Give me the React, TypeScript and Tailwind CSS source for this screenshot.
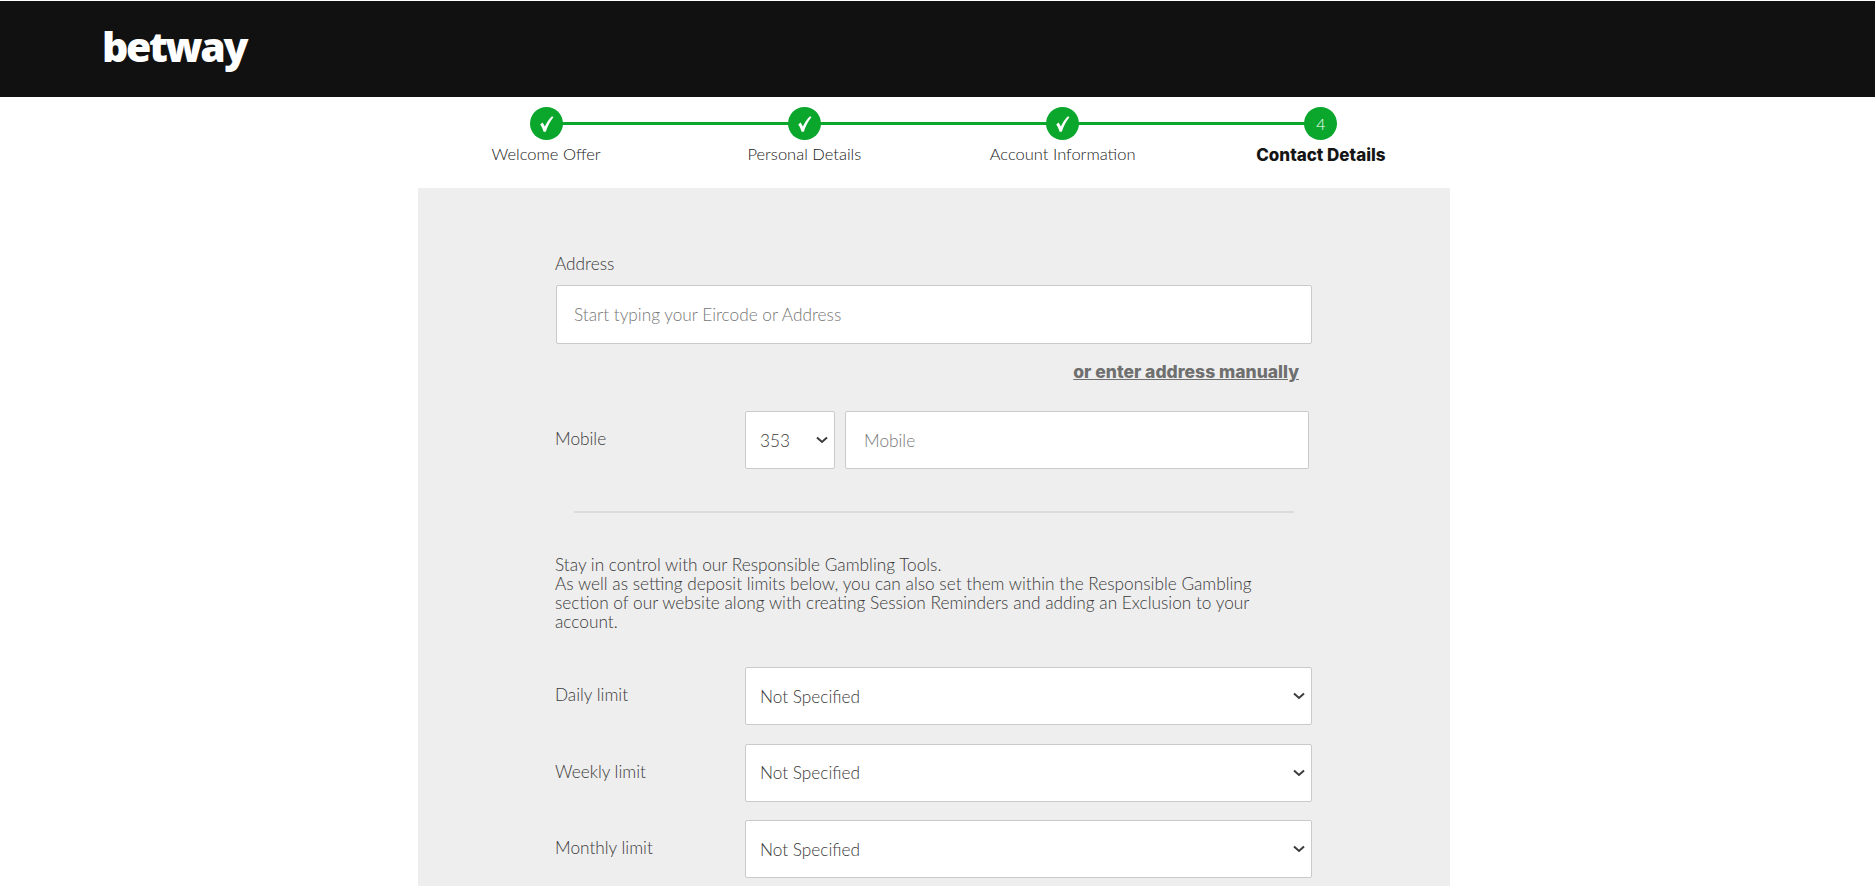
import React from 'react';

const fontLight = "font-['Lato',sans-serif] font-light";

const steps = [
  { label: 'Welcome Offer', done: true },
  { label: 'Personal Details', done: true },
  { label: 'Account Information', done: true },
  { label: 'Contact Details', done: false },
];

const limits = ['Daily limit', 'Weekly limit', 'Monthly limit'];

const Check = () => (
  <svg viewBox="0 0 33 33" className="w-[33px] h-[33px]">
    <path d="M10.2 17.6 L12.6 15.6 L14.9 19.4 C16.6 15.6 19 12.2 22 9.2 L23.4 10.2 C20 14.4 17.6 19 15.8 24.8 L13.6 24.8 C12.8 22 11.6 19.6 10.2 17.6 Z" fill="#fff" />
  </svg>
);

const Chevron = () => (
  <svg viewBox="0 0 12 8" className="w-3 h-2 pointer-events-none" fill="none">
    <path d="M1 1.4 L6 6 L11 1.4" stroke="#3c3c3c" strokeWidth="2" />
  </svg>
);

const SelectBox = ({ value, className }: { value: string; className: string }) => (
  <div className={`relative ${className}`}>
    <select
      defaultValue={value}
      className={`${fontLight} appearance-none w-full h-full bg-white border border-[#cacaca] rounded-[2px] pl-[14px] pt-[1px] text-[17.25px] text-[#3a3a3a] outline-none`}
    >
      <option>{value}</option>
    </select>
    <span className="absolute right-[7px] top-1/2 -translate-y-1/2 flex">
      <Chevron />
    </span>
  </div>
);

export default function App() {
  return (
    <div className="h-screen overflow-hidden bg-white flex flex-col">
      <header className="mt-px h-[96px] shrink-0 bg-[#111111] pl-[102px] pt-[17px]">
        <span className="font-['Open_Sans',sans-serif] font-extrabold text-[41px] leading-[56px] tracking-[-2.4px] text-white">
          betway
        </span>
      </header>

      <div className="ml-[418px] w-[1032px] flex-1 flex flex-col">
        {/* stepper */}
        <div className="relative -ml-px h-[91px] shrink-0 grid grid-cols-4 pt-[10px]">
          <div className="absolute left-[129px] right-[129px] top-[25px] h-[3px] bg-[#0aa72c]" />
          {steps.map((step, i) => (
            <div key={step.label} className="relative flex flex-col items-center">
              <div className="w-[33px] h-[33px] rounded-full bg-[#0aa72c] flex items-center justify-center">
                {step.done ? (
                  <Check />
                ) : (
                  <span className={`${fontLight} text-[16px] text-white`}>{i + 1}</span>
                )}
              </div>
              <span
                className={
                  step.done
                    ? `${fontLight} mt-[3px] text-[16.5px] leading-[22px] text-[#222]`
                    : "font-['Inter',sans-serif] font-extrabold mt-[4px] text-[17px] leading-[23px] text-[#151515]"
                }
              >
                {step.label}
              </span>
            </div>
          ))}
        </div>

        {/* form panel */}
        <div className="flex-1 bg-[#eeeeee] pl-[138px] pt-[66px]">
          <label className={`${fontLight} block -ml-px text-[17.25px] leading-[19px] text-[#3a3a3a]`}>Address</label>
          <input
            placeholder="Start typing your Eircode or Address"
            className={`${fontLight} block mt-[12px] w-[756px] h-[59px] bg-white border border-[#cacaca] rounded-[2px] px-[17px] text-[17.25px] outline-none placeholder:text-[#777]`}
          />
          <div className="w-[743px] mt-[16px] text-right">
            <a className="font-['Inter',sans-serif] font-extrabold text-[17.5px] leading-[24px] text-[#6f6f6f] underline">
              or enter address manually
            </a>
          </div>

          <div className="mt-[27px] flex">
            <label className={`${fontLight} -ml-px w-[190px] shrink-0 text-[17.25px] leading-[19px] pt-[18px] text-[#3a3a3a]`}>Mobile</label>
            <SelectBox value="353" className="w-[90px] h-[58px]" />
            <input
              placeholder="Mobile"
              className={`${fontLight} ml-[10px] w-[464px] h-[58px] bg-white border border-[#cacaca] rounded-[2px] px-[18px] pt-[1px] text-[17.25px] outline-none placeholder:text-[#777]`}
            />
          </div>

          <div className="ml-[18px] mt-[42px] w-[720px] h-[2px] bg-[#dcdcdc]" />

          <p className={`${fontLight} -ml-px mt-[42px] text-[17.25px] leading-[19px] text-[#3a3a3a]`}>
            Stay in control with our Responsible Gambling Tools.
            <br />
            As well as setting deposit limits below, you can also set them within the Responsible Gambling
            <br />
            section of our website along with creating Session Reminders and adding an Exclusion to your
            <br />
            account.
          </p>

          <div className="mt-[36px] flex flex-col gap-[18.5px]">
            {limits.map((name) => (
              <div key={name} className="flex">
                <label className={`${fontLight} -ml-px w-[190px] shrink-0 text-[17.25px] leading-[19px] pt-[18px] text-[#3a3a3a]`}>{name}</label>
                <SelectBox value="Not Specified" className="w-[567px] h-[58px]" />
              </div>
            ))}
          </div>
        </div>
      </div>
    </div>
  );
}
